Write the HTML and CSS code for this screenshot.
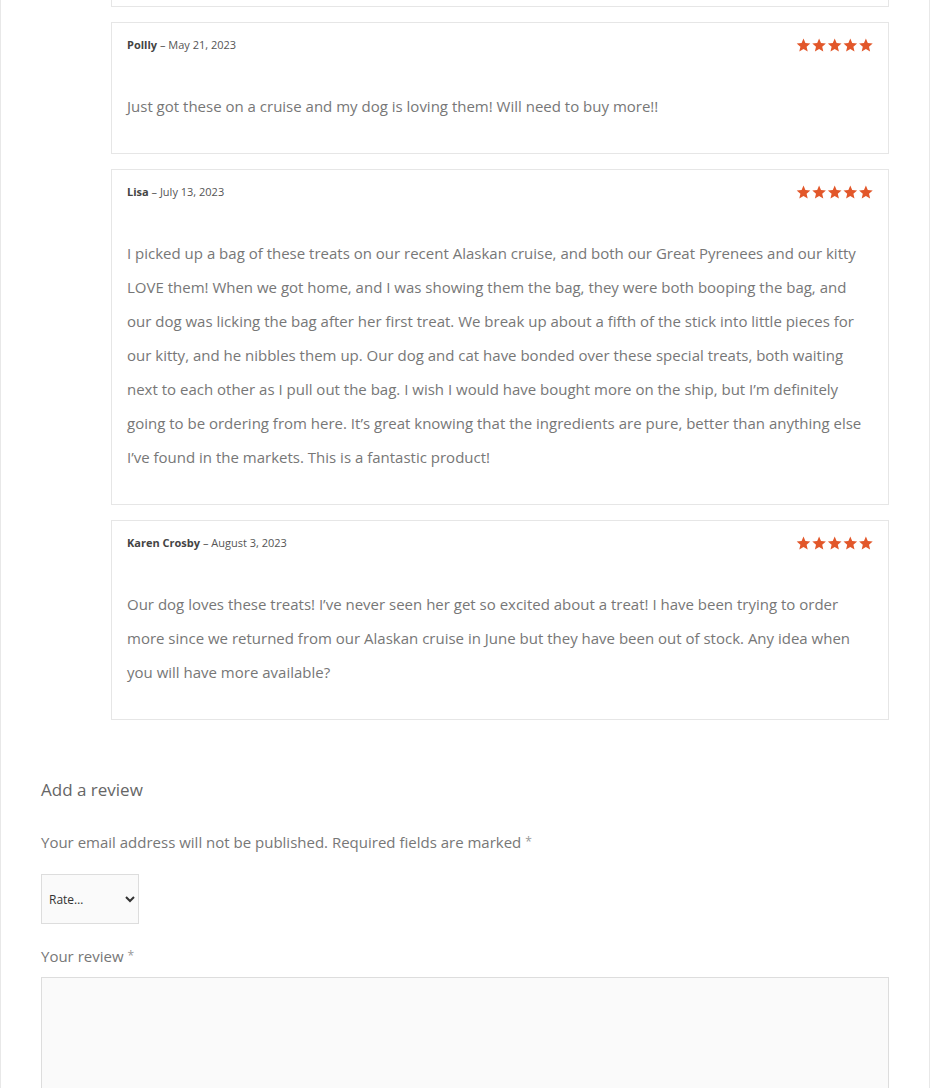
FILE: index.html
```html
<!DOCTYPE html>
<html>
<head>
<meta charset="utf-8">
<link rel="stylesheet" href="styles.css">
</head>
<body>
<div class="page">
  <div class="inner">
    <ol class="reviews">
      <li class="card card-tail"></li>
      <li class="card">
        <div class="head">
          <p class="meta"><strong>Pollly</strong> <span class="dash">–</span> <time>May 21, 2023</time></p>
          <div class="stars" aria-label="Rated 5 out of 5">
            <svg viewBox="0 0 78 15" width="78" height="15"><use href="#five"/></svg>
          </div>
        </div>
        <p class="text">Just got these on a cruise and my dog is loving them! Will need to buy more!!</p>
      </li>
      <li class="card">
        <div class="head">
          <p class="meta"><strong>Lisa</strong> <span class="dash">–</span> <time>July 13, 2023</time></p>
          <div class="stars" aria-label="Rated 5 out of 5">
            <svg viewBox="0 0 78 15" width="78" height="15"><use href="#five"/></svg>
          </div>
        </div>
        <p class="text">I picked up a bag of these treats on our recent Alaskan cruise, and both our Great Pyrenees and our kitty LOVE them! When we got home, and I was showing them the bag, they were both booping the bag, and our dog was licking the bag after her first treat. We break up about a fifth of the stick into little pieces for our kitty, and he nibbles them up. Our dog and cat have bonded over these special treats, both waiting next to each other as I pull out the bag. I wish I would have bought more on the ship, but I’m definitely going to be ordering from here. It’s great knowing that the ingredients are pure, better than anything else I’ve found in the markets. This is a fantastic product!</p>
      </li>
      <li class="card">
        <div class="head">
          <p class="meta"><strong>Karen Crosby</strong> <span class="dash">–</span> <time>August 3, 2023</time></p>
          <div class="stars" aria-label="Rated 5 out of 5">
            <svg viewBox="0 0 78 15" width="78" height="15"><use href="#five"/></svg>
          </div>
        </div>
        <p class="text">Our dog loves these treats! I’ve never seen her get so excited about a treat! I have been trying to order more since we returned from our Alaskan cruise in June but they have been out of stock. Any idea when you will have more available?</p>
      </li>
    </ol>

    <div class="respond">
      <h3 class="reply-title">Add a review</h3>
      <p class="notes">Your email address will not be published. Required fields are marked <span class="req">*</span></p>
      <select class="rating">
        <option>Rate…</option>
        <option>Perfect</option>
        <option>Good</option>
        <option>Average</option>
        <option>Not that bad</option>
        <option>Very poor</option>
      </select>
      <label class="label">Your review <span class="req">*</span></label>
      <textarea class="review-box"></textarea>
    </div>
  </div>
</div>

<svg width="0" height="0" class="defs">
  <defs>
    <path id="star" d="M7.5 0.6 L9.4 5.1 L14.3 5.5 L10.6 8.7 L11.7 13.5 L7.5 11 L3.3 13.5 L4.4 8.7 L0.7 5.5 L5.6 5.1 Z"/>
    <g id="five" fill="#e2572a">
      <use href="#star" x="0"/>
      <use href="#star" x="15.6"/>
      <use href="#star" x="31.2"/>
      <use href="#star" x="46.8"/>
      <use href="#star" x="62.4"/>
    </g>
  </defs>
</svg>
</body>
</html>
```

FILE: styles.css
```css
* { box-sizing: border-box; }

html, body {
  margin: 0;
  padding: 0;
  background: #fff;
}

body {
  font-family: "Open Sans", "Liberation Sans", sans-serif;
  color: #777;
}

.defs {
  position: absolute;
  width: 0;
  height: 0;
}

.page {
  width: 930px;
  min-height: 1088px;
  border-left: 1px solid #e8e8e8;
  border-right: 1px solid #e8e8e8;
  overflow: hidden;
}

.inner {
  padding: 0 40px 0 40px;
}

.reviews {
  list-style: none;
  margin: 0 0 0 70px;
  padding: 0;
  display: flex;
  flex-direction: column;
  gap: 15px;
}

.card {
  border: 1px solid #e6e6e6;
  padding: 13px 16px 15px 15px;
}

.card-tail {
  height: 7px;
  border-top: none;
  padding: 0;
}

.head {
  display: flex;
  justify-content: space-between;
  align-items: center;
}

.meta {
  margin: 0;
  font-size: 11px;
  line-height: 18px;
  color: #555;
}

.meta strong {
  color: #444;
  font-weight: 700;
}

.stars {
  display: flex;
  height: 18px;
  align-items: center;
  margin-right: -2px;
}

.stars svg {
  display: block;
}

.text {
  margin: 35px 0 15px;
  font-size: 15px;
  line-height: 34px;
  color: #777;
}

.respond {
  padding-top: 54px;
}

.reply-title {
  margin: 0;
  font-size: 17px;
  font-weight: 400;
  line-height: 32px;
  color: #666;
}

.notes {
  margin: 24px 0 0;
  font-size: 15px;
  line-height: 24px;
  color: #777;
}

.req {
  color: #999;
  font-size: 12px;
  vertical-align: top;
}

.rating {
  display: block;
  margin-top: 20px;
  width: 98px;
  height: 50px;
  border: 1px solid #ddd;
  border-radius: 0;
  background: #fafafa;
  color: #333;
  font-family: inherit;
  font-size: 12px;
  padding: 0 2px 0 3px;
}

.label {
  display: block;
  margin-top: 20px;
  font-size: 15px;
  line-height: 24px;
  color: #777;
}

.review-box {
  display: block;
  margin-top: 9px;
  width: 848px;
  height: 150px;
  border: 1px solid #ddd;
  border-radius: 0;
  background: #fafafa;
  resize: none;
}
```
